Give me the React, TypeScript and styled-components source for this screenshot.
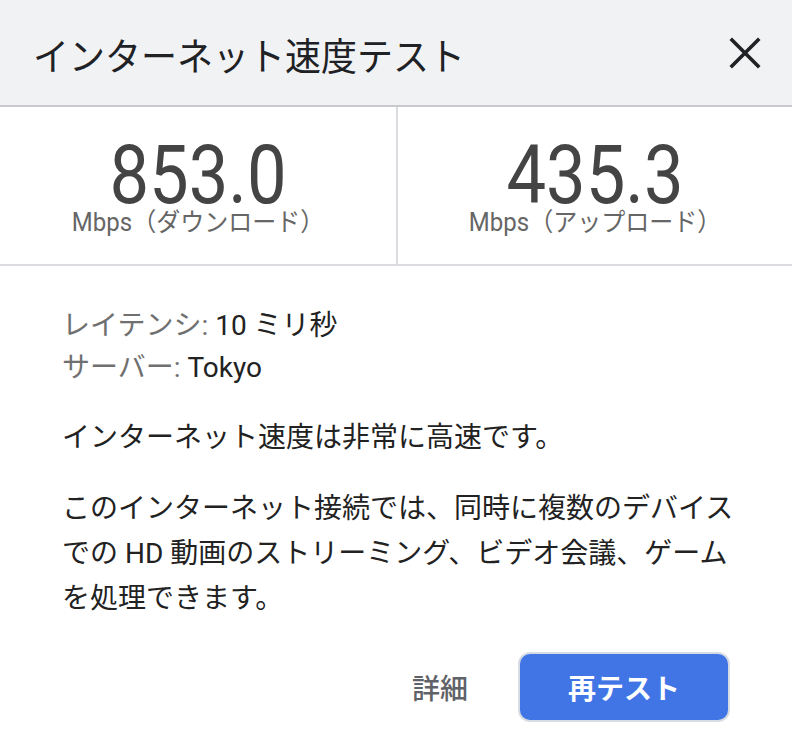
import styled, { createGlobalStyle } from "styled-components";

const GlobalStyle = createGlobalStyle`
    body {
        margin: 0;
        background: #ffffff;
        font-family: Roboto, "Noto Sans CJK JP", sans-serif;
    }
`;

const Dialog = styled.div`
    width: 792px;
    height: 732px;
    background: #ffffff;
    display: flex;
    flex-direction: column;
`;

const Header = styled.div`
    height: 105px;
    background: #f1f2f4;
    border-bottom: 2px solid #c9cacd;
    display: flex;
    align-items: center;
    justify-content: space-between;
    padding: 0 30px 0 33px;
`;

const Title = styled.h1`
    margin: 0;
    font-size: 36px;
    font-weight: 400;
    color: #202124;
    display: inline-block;
    transform: scaleY(1.05);
`;

const CloseButton = styled.button`
    border: none;
    background: none;
    padding: 0;
    width: 34px;
    height: 34px;
    display: flex;
    align-items: center;
    justify-content: center;
    cursor: pointer;
`;

const Speeds = styled.div`
    display: grid;
    grid-template-columns: 398px 1fr;
    height: 157px;
    border-bottom: 2px solid #dadce0;
`;

const SpeedCell = styled.div<{ $divider?: boolean }>`
    display: flex;
    flex-direction: column;
    align-items: center;
    padding-top: 37px;
    border-right: ${(p) => (p.$divider ? "2px solid #dadce0" : "none")};
`;

const SpeedValue = styled.div`
    font-size: 82px;
    line-height: 62px;
    color: #444444;
    transform: scaleX(0.86);
`;

const SpeedUnit = styled.div`
    margin-top: 4px;
    font-size: 24px;
    line-height: 26px;
    color: #666666;
    transform: scaleY(1.06);
`;

const Body = styled.div`
    padding: 39px 56px 0 62px;
    display: flex;
    flex-direction: column;
`;

const StatLine = styled.div`
    font-size: 28px;
    line-height: 42px;
    color: #222222;
`;

const StatLabel = styled.span`
    color: #707070;
`;

const Paragraph = styled.p`
    margin: 26px 0 0 0;
    font-size: 28px;
    line-height: 45px;
    color: #222222;
`;

const Actions = styled.div`
    display: flex;
    justify-content: flex-end;
    align-items: center;
    gap: 50px;
    margin-top: 31px;
    padding-right: 6px;
`;

const LinkButton = styled.button`
    border: none;
    background: none;
    padding: 0;
    font-family: inherit;
    font-size: 28px;
    font-weight: 500;
    color: #5f6368;
    cursor: pointer;
`;

const PrimaryButton = styled.button`
    width: 212px;
    height: 70px;
    border: 2px solid #d7dbe3;
    border-radius: 12px;
    background: #4175e6;
    color: #ffffff;
    font-family: inherit;
    font-size: 28px;
    font-weight: 700;
    cursor: pointer;
`;

const App = () => {
    return (
        <>
            <GlobalStyle />
            <Dialog>
                <Header>
                    <Title>インターネット速度テスト</Title>
                    <CloseButton aria-label="閉じる">
                        <svg width="32" height="32" viewBox="0 0 32 32">
                            <path d="M3 3 L29 29 M29 3 L3 29" stroke="#202124" strokeWidth="3.6" strokeLinecap="square" fill="none" />
                        </svg>
                    </CloseButton>
                </Header>
                <Speeds>
                    <SpeedCell $divider>
                        <SpeedValue>853.0</SpeedValue>
                        <SpeedUnit>Mbps（ダウンロード）</SpeedUnit>
                    </SpeedCell>
                    <SpeedCell>
                        <SpeedValue>435.3</SpeedValue>
                        <SpeedUnit>Mbps（アップロード）</SpeedUnit>
                    </SpeedCell>
                </Speeds>
                <Body>
                    <StatLine><StatLabel>レイテンシ:</StatLabel> 10 ミリ秒</StatLine>
                    <StatLine><StatLabel>サーバー:</StatLabel> Tokyo</StatLine>
                    <Paragraph>インターネット速度は非常に高速です。</Paragraph>
                    <Paragraph>
                        このインターネット接続では、同時に複数のデバイスでの HD 動画のストリーミング、ビデオ会議、ゲームを処理できます。
                    </Paragraph>
                    <Actions>
                        <LinkButton>詳細</LinkButton>
                        <PrimaryButton>再テスト</PrimaryButton>
                    </Actions>
                </Body>
            </Dialog>
        </>
    );
};

export default App;
